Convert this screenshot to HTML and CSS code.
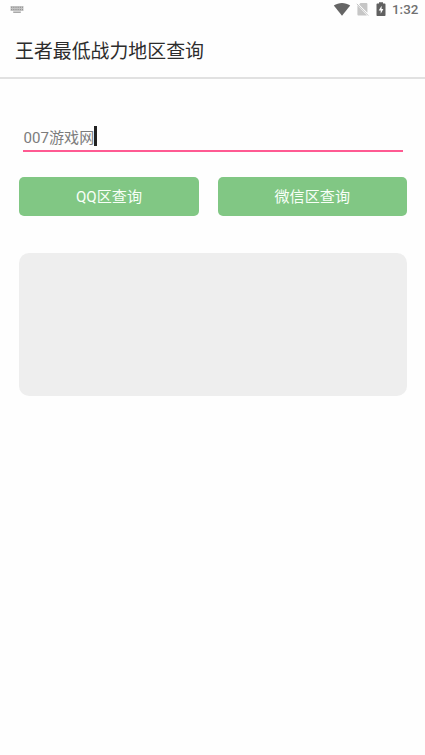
FILE: index.html
```html
<!DOCTYPE html>
<html lang="zh-CN">
<head>
<meta charset="utf-8">
<meta name="viewport" content="width=device-width, initial-scale=1">
<title>王者最低战力地区查询</title>
<link rel="stylesheet" href="styles.css">
</head>
<body>
<div class="status">
  <svg class="keyboard" width="14" height="9" viewBox="0 0 14 9"><path d="M.5 1h13v5H.5z" fill="#c4c4c4"/><path d="M1 2.300h12M1 4.600h12" stroke="#909090" stroke-width="1" stroke-dasharray="1.2 1"/><path d="M3.200 7.200h7.600" stroke="#a0a0a0" stroke-width="1.4"/></svg>
  <div class="indicators">
    <svg class="wifi" width="18" height="14" viewBox="0 0 18 14"><path d="M.8 3.500C5.700 0 12.300 0 17.200 3.500L9 13.800z" fill="#656565"/></svg>
    <svg class="sim" width="13" height="14" viewBox="0 0 13 14"><path d="M4.500 1H10.500q.9 0 .9.900V10.800L3.100 2.500zM1.400 3.300L11 13.400H2.300q-.9 0-.9-.9z" fill="#c6c6c6"/><path d="M.8 1.800L12.300 13.600" stroke="#c6c6c6" stroke-width="1"/></svg>
    <svg class="battery" width="10" height="15" viewBox="0 0 10 15"><path d="M3 .2h4v1.400h1.700q.8 0 .8.800v10.900q0 .8-.8.800H1.300q-.8 0-.8-.8V2.400q0-.8.8-.8H3z" fill="#606060"/><path d="M5.600 3.800L2.700 8.500h2v3.300L7.400 7.100h-1.800z" fill="#fff"/></svg>
    <span class="clock">1:32</span>
  </div>
</div>
<header class="bar"><h1>王者最低战力地区查询</h1></header>
<main>
  <div class="field"><span>007游戏网</span><i class="caret"></i></div>
  <div class="buttons">
    <button>QQ区查询</button>
    <button>微信区查询</button>
  </div>
  <div class="result"></div>
</main>
</body>
</html>
```
FILE: styles.css
```css
* { box-sizing: border-box; }
body {
  margin: 0;
  min-height: 755px;
  background: #fefefe;
  font-family: Roboto, "Noto Sans CJK SC", sans-serif;
}
.status {
  height: 20px;
  padding: 0 6px 0 10px;
  display: flex;
  justify-content: space-between;
}
.keyboard { margin-top: 5px; }
.indicators { display: flex; }
.wifi { margin: 2px 5px 0 0; }
.sim { margin: 2px 7px 0 0; }
.battery { margin: 2px 6px 0 0; }
.clock {
  width: 27px;
  font-size: 13.400px;
  font-weight: 500;
  line-height: 20px;
  color: #707070;
  white-space: nowrap;
}
.bar {
  height: 59px;
  padding: 2px 15px 0;
  border-bottom: 2px solid #e1e1e1;
}
h1 {
  margin: 0;
  font-size: 18.900px;
  font-weight: 400;
  line-height: 60px;
  color: #2c2c2c;
}
main { padding: 45px 18px 0 19px; }
.field {
  height: 27.500px;
  margin: 0 4px;
  padding-left: .5px;
  display: flex;
  align-items: flex-start;
  border-bottom: 2px solid #ff5a92;
  font-size: 15.100px;
  line-height: 28px;
  color: #7c7c7c;
}
.caret {
  width: 2.500px;
  height: 20px;
  margin: 2px 0 0 0;
  background: #222;
}
.buttons {
  margin-top: 25.500px;
  display: grid;
  grid-template-columns: 180px 189.500px;
  justify-content: space-between;
}
button {
  height: 38.500px;
  padding: 2px 0 0;
  border: 0;
  border-radius: 5px;
  background: #81c784;
  color: #f8fff8;
  font: 400 15.100px/37px Roboto, "Noto Sans CJK SC", sans-serif;
}
.result {
  height: 142.500px;
  margin-top: 37.500px;
  border-radius: 10px;
  background: #eee;
}
```
